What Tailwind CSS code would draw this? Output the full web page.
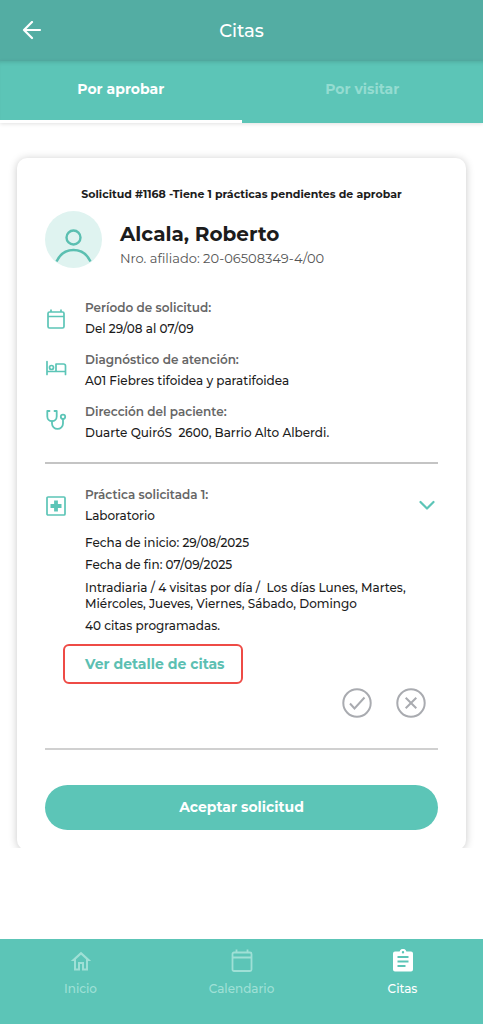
<!DOCTYPE html>
<html lang="es">
<head>
<meta charset="utf-8">
<meta name="viewport" content="width=device-width, initial-scale=1">
<title>Citas</title>
<script src="https://cdn.jsdelivr.net/npm/@tailwindcss/browser@4"></script>
</head>
<body class="min-h-screen flex flex-col bg-white font-[Montserrat,Inter,sans-serif] text-[12px] font-medium text-[#1c1c1c]">
<header class="grid grid-cols-[64px_1fr_64px] items-center h-[61px] bg-[#53ada3] text-white">
  <button type="button" aria-label="Volver" class="flex justify-center">
    <svg class="size-5" viewBox="0 0 20 20" fill="none" stroke="currentColor" stroke-width="2.2" stroke-linecap="round" stroke-linejoin="round"><path d="M18 9H2M10 1L2 9l8 8"/></svg>
  </button>
  <h1 class="text-center text-[18px] leading-6">Citas</h1>
</header>
<div role="tablist" class="grid grid-cols-2 h-[62px] bg-[#5cc5b7] text-[14px] font-bold shadow-[0_1px_4px_rgba(0,0,0,0.12),inset_0_4px_4px_-3px_rgba(0,0,0,0.15)]">
  <button type="button" role="tab" aria-selected="true" class="text-white border-b-3 border-white pt-px pb-1">Por aprobar</button>
  <button type="button" role="tab" aria-selected="false" class="text-[#94dcd1] border-b-3 border-transparent pt-px pb-1">Por visitar</button>
</div>
<main class="overflow-hidden pt-[35px] px-[17px]">
  <article class="-mb-[2px] rounded-[10px] bg-white px-7 pt-7 pb-5 shadow-[0_1px_8px_rgba(0,0,0,0.22)]">
    <p class="text-center text-[11px] leading-4 font-bold">Solicitud #1168 -Tiene 1 prácticas pendientes de aprobar</p>
    <div class="mt-[9px] flex items-center gap-[18px]">
      <svg class="size-[57px] shrink-0" viewBox="0 0 57 57" fill="none" stroke="#5bbfb1" stroke-width="2.4"><circle cx="28.500" cy="28.500" r="28.500" fill="#dff3f0" stroke="none"/><circle cx="28.500" cy="26.500" r="7"/><path d="M11.500 50.500C15 43 21 39 28.500 39s13.500 4 17 11.500"/></svg>
      <div class="pt-[9px]">
        <h2 class="text-[20px] leading-7 font-bold">Alcala, Roberto</h2>
        <p class="text-[13px] leading-5 font-normal text-[#555]">Nro. afiliado: 20-06508349-4/00</p>
      </div>
    </div>
    <dl class="mt-8 flex flex-col gap-[13px]">
      <div class="grid grid-cols-[22px_1fr] gap-x-[18px]">
        <svg class="row-span-2 mt-2 size-[22px]" viewBox="0 0 22 22" fill="none" stroke="#5cc5b7" stroke-width="1.7" stroke-linejoin="round"><rect x="3" y="4" width="16" height="16" rx="1.500"/><path d="M3 8.500h16M6 1.500V4M16 1.500V4"/></svg>
        <dt class="leading-4 font-semibold text-[#666]">Período de solicitud:</dt>
        <dd class="mt-[3px] leading-5">Del 29/08 al 07/09</dd>
      </div>
      <div class="grid grid-cols-[22px_1fr] gap-x-[18px]">
        <svg class="row-span-2 mt-[5px] size-[22px]" viewBox="0 0 22 22" fill="none" stroke="#5cc5b7" stroke-width="1.7" stroke-linecap="round" stroke-linejoin="round"><path d="M2 4.500v13M2 14.500h18.500M20.500 17.500V9a2 2 0 0 0-2-2H11v7.500"/><circle cx="6.500" cy="10.500" r="2"/></svg>
        <dt class="leading-4 font-semibold text-[#666]">Diagnóstico de atención:</dt>
        <dd class="mt-[3px] leading-5">A01 Fiebres tifoidea y paratifoidea</dd>
      </div>
      <div class="grid grid-cols-[22px_1fr] gap-x-[18px]">
        <svg class="row-span-2 mt-[5px] size-[22px]" viewBox="0 0 22 22" fill="none" stroke="#5cc5b7" stroke-width="1.8" stroke-linecap="round" stroke-linejoin="round"><path d="M4.500 2H2.300V7.500a4.700 4.700 0 0 0 9.400 0V2H9.500"/><path d="M7 12.200v2.200a5.500 5.500 0 0 0 11 0V10"/><circle cx="18" cy="7.800" r="2.200"/></svg>
        <dt class="leading-4 font-semibold text-[#666]">Dirección del paciente:</dt>
        <dd class="mt-[3px] leading-5 whitespace-pre-wrap">Duarte QuiróS  2600, Barrio Alto Alberdi.</dd>
      </div>
    </dl>
    <hr class="mt-[19px] border-t-2 border-[#c4c4c4]">
    <section class="mt-[23px] grid grid-cols-[22px_1fr_22px] gap-x-[18px]">
      <svg class="mt-2 size-[22px]" viewBox="0 0 22 22" fill="none" stroke="#5cc5b7"><rect x="2" y="2" width="18" height="18" rx="1" stroke-width="1.700"/><path d="M11 5.500v11M5.500 11h11" stroke-width="3.800"/></svg>
      <div>
        <h3 class="leading-4 font-semibold text-[#666]">Práctica solicitada 1:</h3>
        <p class="mt-[3px] leading-5">Laboratorio</p>
        <p class="mt-[7px] leading-5">Fecha de inicio: 29/08/2025</p>
        <p class="mt-[2px] leading-5">Fecha de fin: 07/09/2025</p>
        <p class="mt-[5px] -mr-5 leading-4 whitespace-pre-wrap">Intradiaria / 4 visitas por día /  Los días Lunes, Martes, Miércoles, Jueves, Viernes, Sábado, Domingo</p>
        <p class="mt-1 leading-5">40 citas programadas.</p>
      </div>
      <button type="button" aria-label="Contraer práctica" class="mt-[7px] h-[22px]">
        <svg class="size-[22px]" viewBox="0 0 22 22" fill="none" stroke="#5cc5b7" stroke-width="2.2" stroke-linecap="round" stroke-linejoin="round"><path d="M4.500 8l6.500 6.500L17.500 8"/></svg>
      </button>
    </section>
    <button type="button" class="mt-2 ml-[18px] block h-10 rounded-md border-2 border-[#ee4b46] pl-5 pr-4 text-[14px] leading-5 font-bold text-[#5cbfb2]">Ver detalle de citas</button>
    <div class="mt-1 flex justify-end gap-6 pr-3 text-[#a9abb0]">
      <button type="button" aria-label="Aprobar">
        <svg class="size-[30px]" viewBox="0 0 30 30" fill="none" stroke="currentColor" stroke-width="2"><circle cx="15" cy="15" r="13.700"/><path d="M8 15.500l4.500 5L22.500 9.500"/></svg>
      </button>
      <button type="button" aria-label="Rechazar">
        <svg class="size-[30px]" viewBox="0 0 30 30" fill="none" stroke="currentColor" stroke-width="2"><circle cx="15" cy="15" r="13.700"/><path d="M9.700 9.700l10.600 10.600M20.300 9.700L9.700 20.300"/></svg>
      </button>
    </div>
    <hr class="mt-[30px] border-t-2 border-[#d0d0d0]">
    <button type="button" class="mt-[35px] h-[45px] w-full rounded-full bg-[#5cc5b7] text-[14px] font-bold text-white">Aceptar solicitud</button>
  </article>
</main>
<nav class="mt-auto grid grid-cols-3 h-[85px] bg-[#5cc5b7] pt-2.5 leading-5 text-[#9fe0d6]">
  <a href="#inicio" class="flex flex-col items-center gap-1.5">
    <svg class="size-6" viewBox="0 0 24 24" fill="currentColor"><path d="M12 5.700l5 4.500V19.500h-2v-6.500H9v6.500H7v-9.300l5-4.500M12 2.800L1.800 12H5v9.500h6v-6.500h2v6.500h6V12h3.200L12 2.800z"/></svg>
    Inicio
  </a>
  <a href="#calendario" class="flex flex-col items-center gap-1.5">
    <svg class="size-6" viewBox="0 0 24 24" fill="none" stroke="currentColor" stroke-width="1.800" stroke-linejoin="round"><rect x="2.500" y="3.500" width="19" height="18.500" rx="1.500"/><path d="M2.500 8.500h19M6.500 0.500v3M17.500 0.500v3"/></svg>
    Calendario
  </a>
  <a href="#citas" aria-current="page" class="flex flex-col items-center gap-1.5 text-white">
    <svg class="size-6" viewBox="0 0 24 24"><path fill="currentColor" fill-rule="evenodd" d="M20 2.500h-4.600a3.500 3.500 0 0 0-6.800 0H4a2 2 0 0 0-2 2v16a2 2 0 0 0 2 2h16a2 2 0 0 0 2-2v-16a2 2 0 0 0-2-2zM12 2a1.200 1.200 0 1 1 0 2.400A1.200 1.200 0 0 1 12 2zM6.500 7h11v2h-11zM6.500 11.500h11v2h-11zM6.500 16h8v2h-8z"/></svg>
    Citas
  </a>
</nav>
</body>
</html>
